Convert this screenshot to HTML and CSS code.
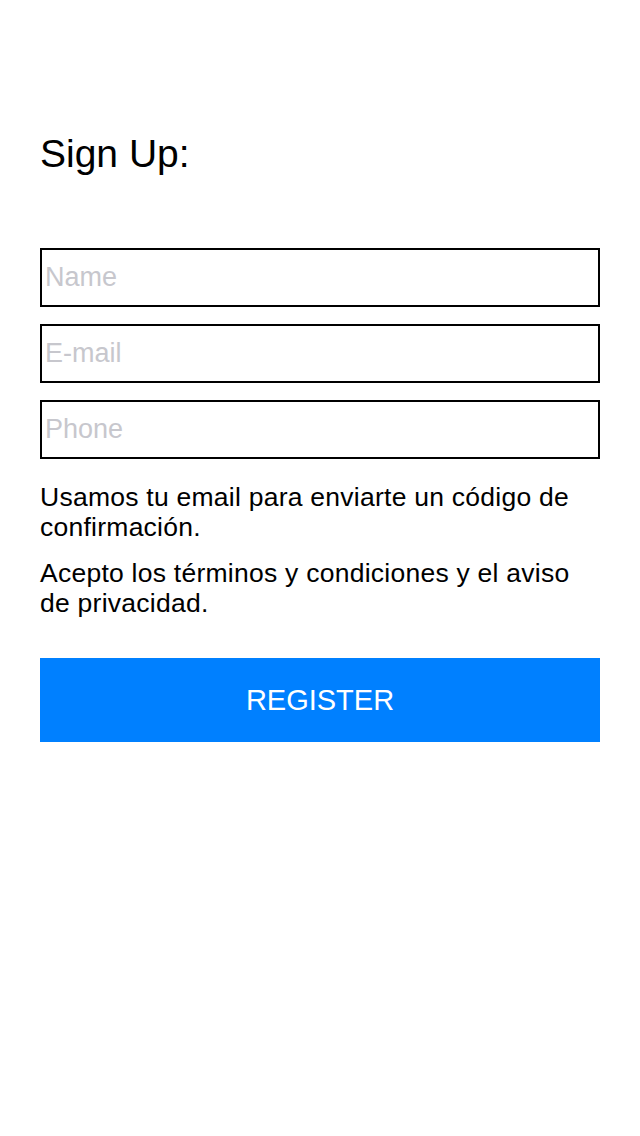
FILE: index.html
```html
<!DOCTYPE html>
<html>
<head>
<meta charset="utf-8">
<link rel="stylesheet" href="styles.css">
</head>
<body>
<main class="page">
  <h1 class="title">Sign Up:</h1>
  <form class="form">
    <div class="field"><input class="input" type="text" placeholder="Name"></div>
    <div class="field"><input class="input" type="text" placeholder="E-mail"></div>
    <div class="field"><input class="input" type="text" placeholder="Phone"></div>
    <p class="note">Usamos tu email para enviarte un código de confirmación.</p>
    <p class="note">Acepto los términos y condiciones y el aviso de privacidad.</p>
    <button class="button" type="button">REGISTER</button>
  </form>
</main>
</body>
</html>
```
FILE: styles.css
```css
html, body {
  margin: 0;
  padding: 0;
  background: #fff;
}
body {
  font-family: "Liberation Sans", Arial, sans-serif;
  color: #000;
  width: 640px;
  height: 1136px;
}
.page {
  padding: 130px 40px 0 40px;
}
.title {
  margin: 0;
  font-weight: normal;
  font-size: 39px;
  line-height: 48px;
  height: 48px;
}
.form {
  margin-top: 70px;
  display: flex;
  flex-direction: column;
}
.field {
  margin-bottom: 17px;
}
.input {
  box-sizing: border-box;
  display: block;
  width: 560px;
  height: 59px;
  border: 2px solid #000;
  padding: 0 4px 0 3px;
  margin: 0;
  font-family: "Liberation Sans", Arial, sans-serif;
  font-size: 27px;
  color: #000;
  outline: none;
  background: #fff;
  border-radius: 0;
}
.input::placeholder {
  color: #c7c7cd;
}
.note {
  margin: 0 0 16px 0;
  font-size: 26.5px;
  line-height: 30px;
  letter-spacing: 0.25px;
}
.field + .note {
  margin-top: 6px;
}
.note + .note {
  margin-bottom: 40px;
}
.button {
  box-sizing: border-box;
  width: 560px;
  height: 84px;
  border: none;
  margin: 0;
  background: #0080ff;
  color: #fff;
  font-family: "Liberation Sans", Arial, sans-serif;
  font-size: 29px;
  padding: 0;
  border-radius: 0;
}
```
